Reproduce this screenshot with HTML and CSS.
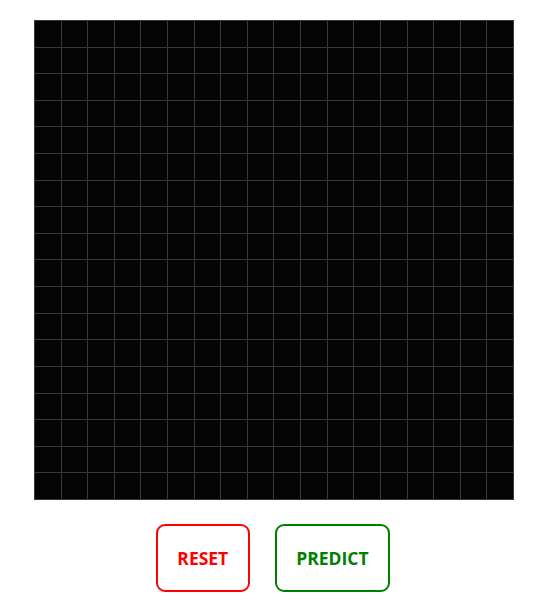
FILE: index.html
```html
<!DOCTYPE html>
<html>
<head>
<meta charset="utf-8">
<link rel="stylesheet" href="styles.css">
</head>
<body>
<div class="app">
  <div class="board" id="board"></div>
  <div class="actions">
    <button class="btn btn-reset">RESET</button>
    <button class="btn btn-predict">PREDICT</button>
  </div>
</div>
<script>
  var b = document.getElementById('board');
  for (var i = 0; i < 324; i++) {
    var c = document.createElement('div');
    c.className = 'cell';
    b.appendChild(c);
  }
</script>
</body>
</html>
```
FILE: styles.css
```css
html, body {
  margin: 0;
  padding: 0;
  background: #fff;
  font-family: "Open Sans", "Noto Sans", sans-serif;
}
.app {
  display: flex;
  flex-direction: column;
  align-items: center;
  padding-top: 20px;
}
.board {
  width: 480px;
  height: 480px;
  box-sizing: border-box;
  display: grid;
  grid-template-columns: repeat(18, 1fr);
  grid-template-rows: repeat(18, 1fr);
  gap: 1px;
  padding: 1px;
  background: #383838;
}
.cell {
  background: #040404;
}
.actions {
  display: flex;
  gap: 25px;
  margin-top: 24px;
  margin-right: 2px;
}
.btn {
  font-family: "Open Sans", "Noto Sans", sans-serif;
  font-weight: 700;
  font-size: 17.5px;
  line-height: 24px;
  padding: 20px 19.5px;
  background: #fff;
  border-radius: 9px;
  border: 2px solid;
  cursor: pointer;
}
.btn-reset {
  color: #ff0000;
  border-color: #ff0000;
}
.btn-predict {
  color: #008000;
  border-color: #008000;
}
```
